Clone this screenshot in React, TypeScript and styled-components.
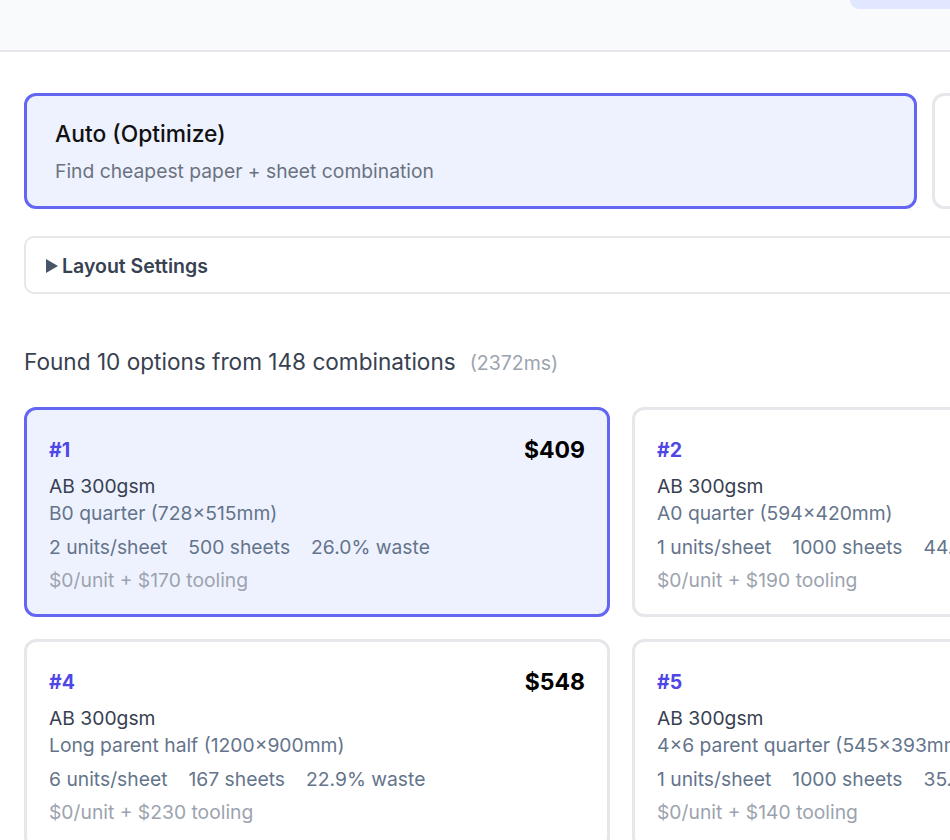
import React from 'react';
import styled, { createGlobalStyle } from 'styled-components';

const GlobalStyle = createGlobalStyle`
  html, body {
    margin: 0;
    padding: 0;
    background: #ffffff;
    overflow: hidden;
  }

  body {
    font-family: Inter, "Noto Sans", "Liberation Sans", sans-serif;
    color: #111827;
  }
`;

const TopBar = styled.header`
  display: flex;
  justify-content: flex-end;
  align-items: flex-start;
  height: 50px;
  background: #f9fafb;
  border-bottom: 2px solid #e5e7eb;
`;

const TabPill = styled.div`
  width: 100px;
  height: 9px;
  background: #e0e7ff;
  border-bottom-left-radius: 10px;
`;

const Main = styled.main`
  padding: 41px 0 40px 24px;
  width: 1850px;
`;

const ModeGrid = styled.div`
  display: grid;
  grid-template-columns: 893px 893px;
  gap: 15px;
`;

const ModeCard = styled.div<{ $active?: boolean }>`
  box-sizing: border-box;
  height: 116px;
  padding: 23px 28px;
  border: 3px solid ${p => (p.$active ? '#6366f1' : '#e5e7eb')};
  border-radius: 12px;
  background: ${p => (p.$active ? '#eef2ff' : '#ffffff')};
`;

const ModeTitle = styled.div`
  font-size: 22.8px;
  font-weight: 500;
  line-height: 30px;
  color: #111111;
`;

const ModeHint = styled.div`
  margin-top: 8px;
  font-size: 19.3px;
  line-height: 28px;
  color: #6b7280;
`;

const Settings = styled.details`
  box-sizing: border-box;
  margin-top: 27px;
  height: 58px;
  border: 2px solid #e5e7eb;
  border-radius: 10px;
  background: #ffffff;

  summary {
    display: flex;
    align-items: center;
    gap: 4px;
    height: 55px;
    padding: 0 20px;
    list-style: none;
    font-size: 19.5px;
    font-weight: 600;
    color: #374151;
    cursor: pointer;
  }

  summary::-webkit-details-marker {
    display: none;
  }
`;

const Caret = styled.span`
  width: 0;
  height: 0;
  border-top: 7px solid transparent;
  border-bottom: 7px solid transparent;
  border-left: 12px solid #475569;
`;

const Summary = styled.h2`
  display: flex;
  align-items: baseline;
  gap: 14px;
  margin: 53px 0 29px;
  font-size: 22.6px;
  font-weight: 400;
  line-height: 30px;
  color: #374151;
`;

const Timing = styled.span`
  font-size: 19.5px;
  font-weight: 400;
  color: #9ca3af;
`;

const ResultGrid = styled.div`
  display: grid;
  grid-template-columns: repeat(3, 586px);
  gap: 22px;
`;

const ResultCard = styled.div<{ $best?: boolean }>`
  box-sizing: border-box;
  height: 210px;
  padding: 23px 22px 22px;
  border: 3px solid ${p => (p.$best ? '#6366f1' : '#e5e7eb')};
  border-radius: 12px;
  background: ${p => (p.$best ? '#eef2ff' : '#ffffff')};
`;

const CardHead = styled.div`
  display: flex;
  justify-content: space-between;
  align-items: center;
  height: 34px;
`;

const Rank = styled.span`
  font-size: 19.5px;
  font-weight: 700;
  color: #4f46e5;
`;

const Price = styled.span`
  font-size: 23px;
  font-weight: 700;
  color: #000000;
`;

const Paper = styled.div`
  margin-top: 6px;
  font-size: 19.3px;
  line-height: 27px;
  color: #374151;
`;

const Sheet = styled.div`
  font-size: 19.3px;
  line-height: 27px;
  color: #64748b;
`;

const Stats = styled.div`
  display: flex;
  gap: 21px;
  margin-top: 7px;
  font-size: 19.3px;
  line-height: 27px;
  color: #64748b;
  white-space: nowrap;
`;

const Cost = styled.div`
  margin-top: 6px;
  font-size: 19.3px;
  line-height: 27px;
  color: #9ca3af;
`;

type Option = {
  rank: number;
  price: string;
  paper: string;
  sheet: string;
  perSheet: number;
  sheets: number;
  waste: string;
  tooling: number;
};

const options: Option[] = [
  { rank: 1, price: '$409', paper: 'AB 300gsm', sheet: 'B0 quarter (728×515mm)', perSheet: 2, sheets: 500, waste: '26.0', tooling: 170 },
  { rank: 2, price: '$434', paper: 'AB 300gsm', sheet: 'A0 quarter (594×420mm)', perSheet: 1, sheets: 1000, waste: '44.1', tooling: 190 },
  { rank: 3, price: '$512', paper: 'AB 300gsm', sheet: 'A1 half (841×594mm)', perSheet: 2, sheets: 500, waste: '38.4', tooling: 210 },
  { rank: 4, price: '$548', paper: 'AB 300gsm', sheet: 'Long parent half (1200×900mm)', perSheet: 6, sheets: 167, waste: '22.9', tooling: 230 },
  { rank: 5, price: '$561', paper: 'AB 300gsm', sheet: '4×6 parent quarter (545×393mm)', perSheet: 1, sheets: 1000, waste: '35.2', tooling: 140 },
  { rank: 6, price: '$590', paper: 'AB 300gsm', sheet: 'B1 half (1030×728mm)', perSheet: 4, sheets: 250, waste: '31.7', tooling: 200 },
];

const App = () => {
  return (
    <>
      <GlobalStyle />
      <TopBar>
        <TabPill />
      </TopBar>

      <Main>
        <ModeGrid>
          <ModeCard $active>
            <ModeTitle>Auto (Optimize)</ModeTitle>
            <ModeHint>Find cheapest paper + sheet combination</ModeHint>
          </ModeCard>
          <ModeCard>
            <ModeTitle>Manual</ModeTitle>
            <ModeHint>Pick paper and sheet size yourself</ModeHint>
          </ModeCard>
        </ModeGrid>

        <Settings>
          <summary>
            <Caret />
            Layout Settings
          </summary>
        </Settings>

        <Summary>
          Found 10 options from 148 combinations
          <Timing>(2372ms)</Timing>
        </Summary>

        <ResultGrid>
          {options.map(o => (
            <ResultCard key={o.rank} $best={o.rank === 1}>
              <CardHead>
                <Rank>#{o.rank}</Rank>
                <Price>{o.price}</Price>
              </CardHead>
              <Paper>{o.paper}</Paper>
              <Sheet>{o.sheet}</Sheet>
              <Stats>
                <span>{o.perSheet} units/sheet</span>
                <span>{o.sheets} sheets</span>
                <span>{o.waste}% waste</span>
              </Stats>
              <Cost>$0/unit + ${o.tooling} tooling</Cost>
            </ResultCard>
          ))}
        </ResultGrid>
      </Main>
    </>
  );
};

export default App;
